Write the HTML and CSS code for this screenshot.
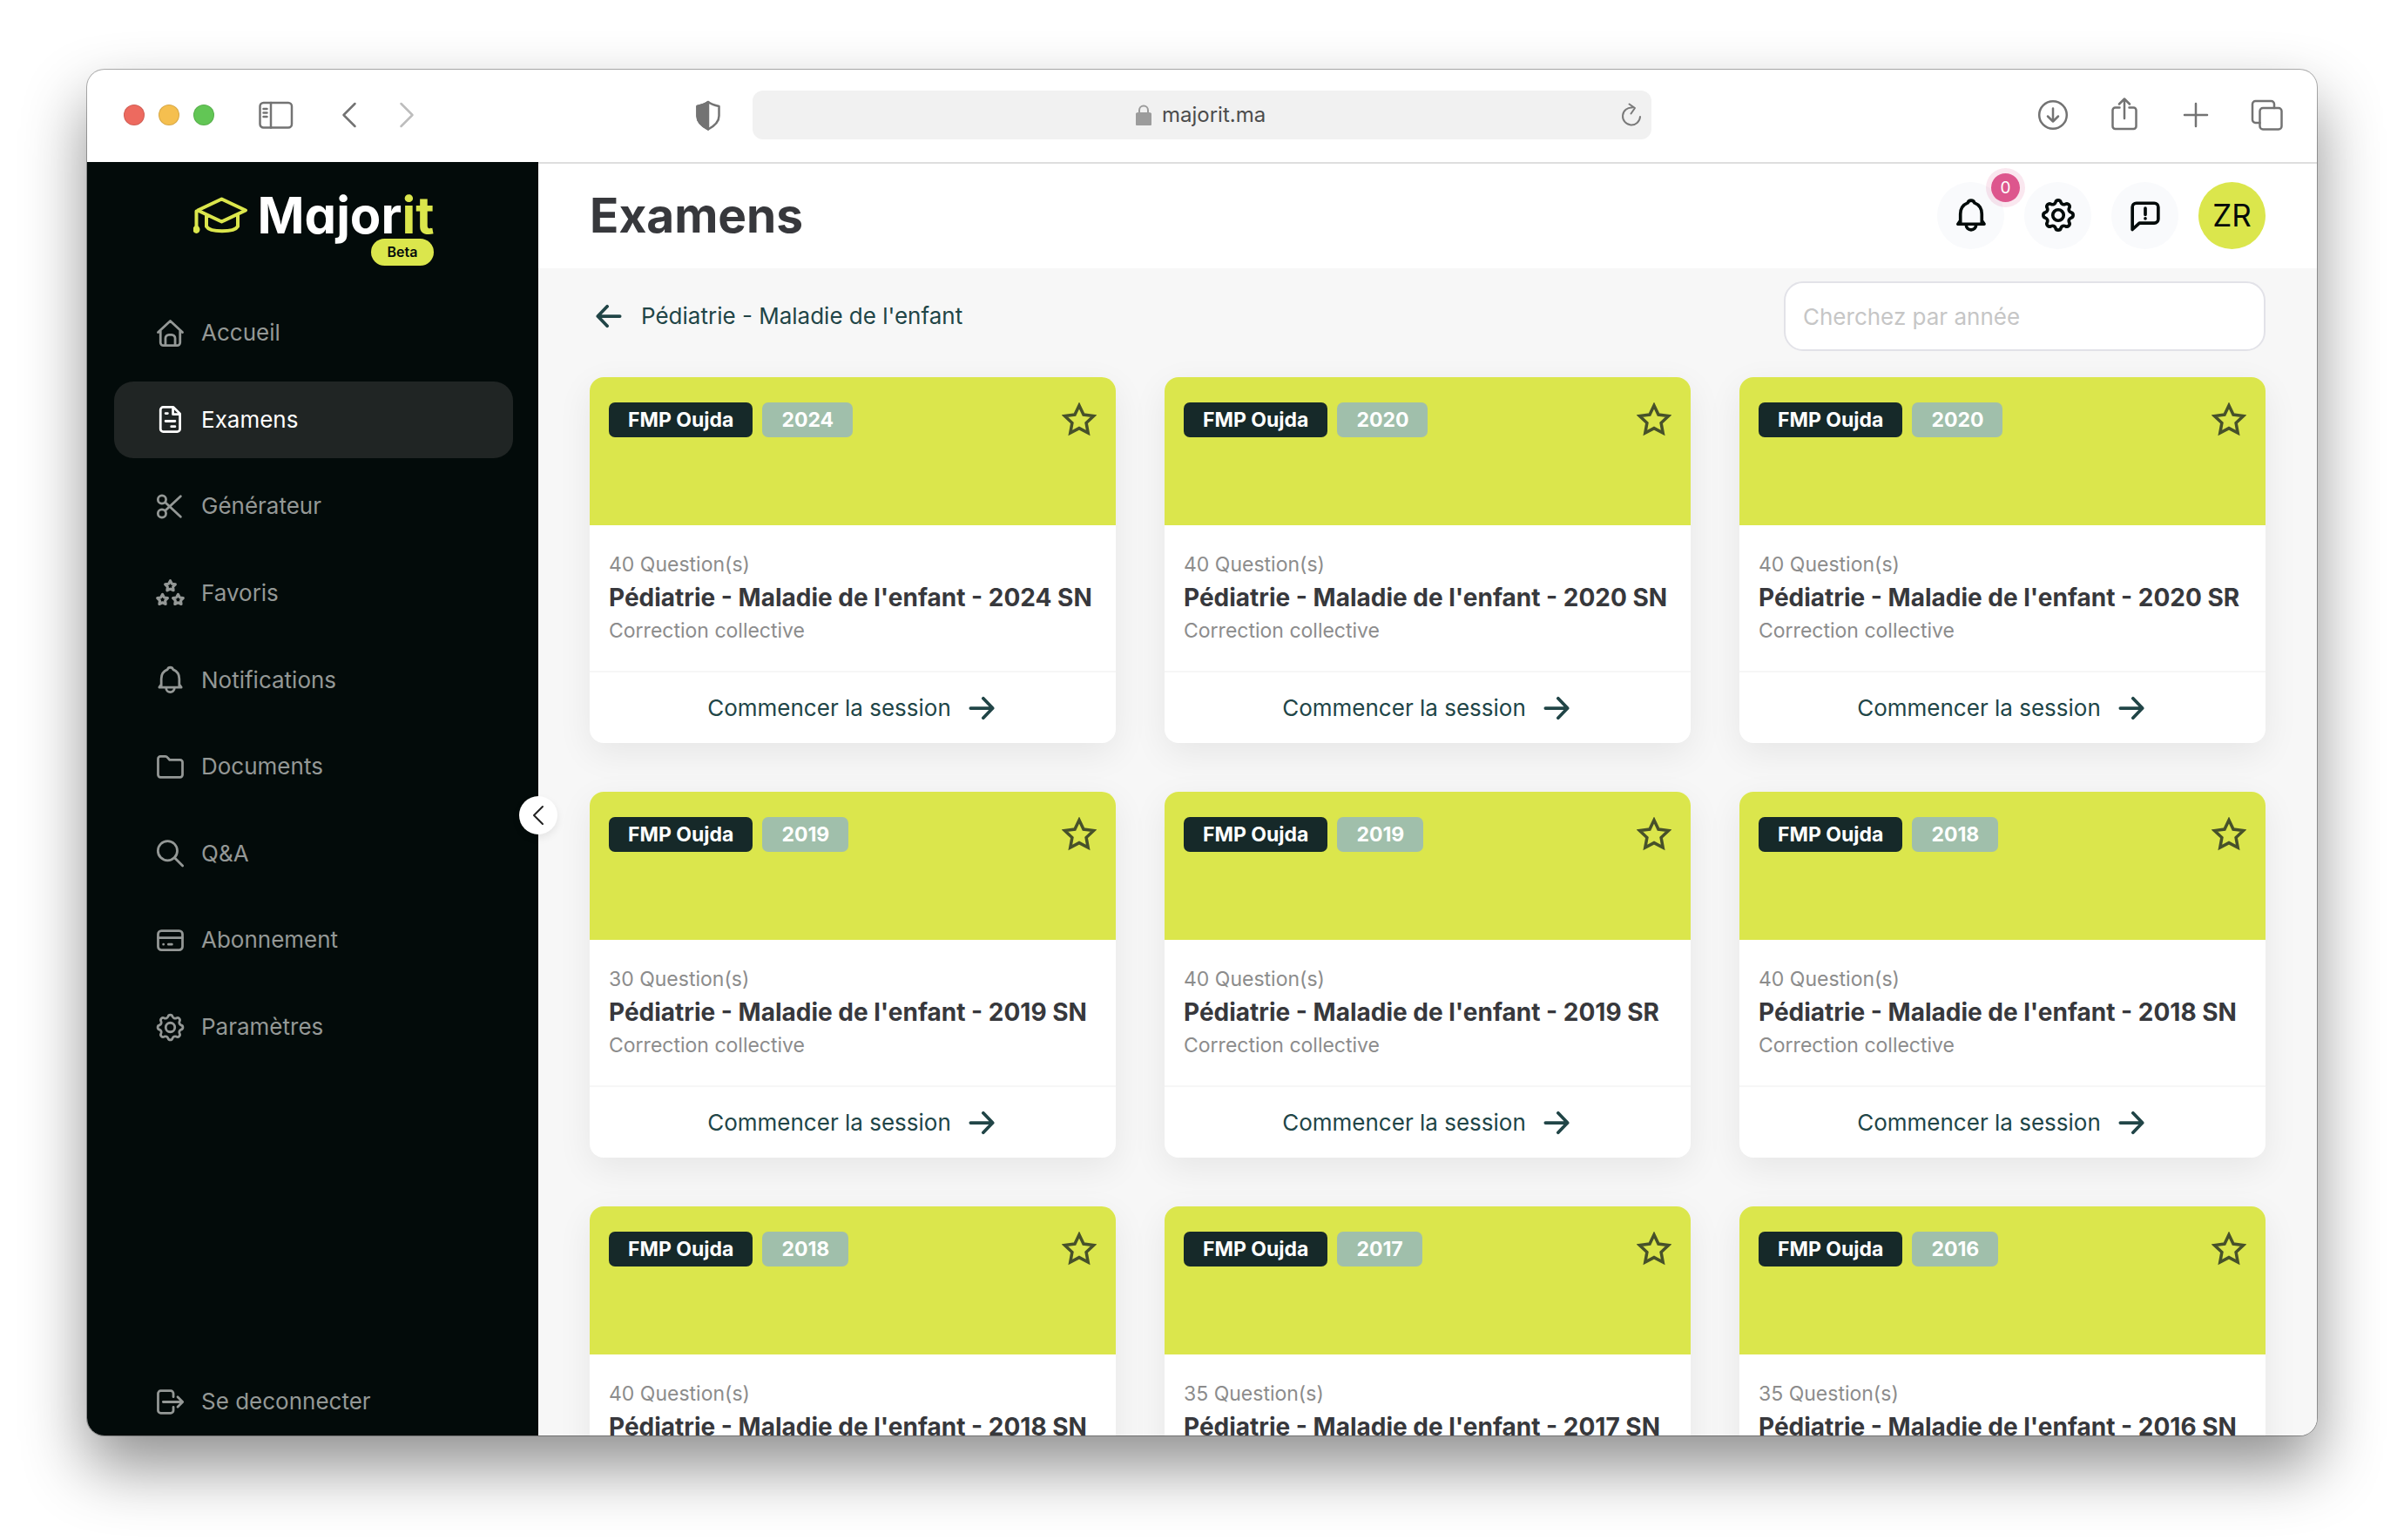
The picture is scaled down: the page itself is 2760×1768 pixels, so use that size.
FILE: index.html
```html
<!DOCTYPE html>
<html lang="fr">
<head>
<meta charset="utf-8">
<meta name="viewport" content="width=device-width, initial-scale=1">
<title>Majorit - Examens</title>
<link rel="stylesheet" href="styles.css">
</head>
<body>
<svg class="sprite" aria-hidden="true">
  <symbol id="i-star" viewBox="0 0 40 40"><path d="M20 3.5l5 10.6 11.6 1.5-8.5 8 2.1 11.5L20 29.6 9.8 35.1l2.1-11.5-8.5-8L15 14.1z"/></symbol>
  <symbol id="i-arrow" viewBox="0 0 32 32"><path d="M2.5 16h27M18 4l11.500 12L18 28"/></symbol>
  <symbol id="i-gear" viewBox="0 0 24 24"><circle cx="12" cy="12" r="3.400"/><path d="M10.300 3.980A1.750 1.750 0 0 1 13.700 3.980A2 2 0 0 0 16.470 5.120A1.750 1.750 0 0 1 18.880 7.530A2 2 0 0 0 20.020 10.300A1.750 1.750 0 0 1 20.020 13.700A2 2 0 0 0 18.880 16.470A1.750 1.750 0 0 1 16.470 18.880A2 2 0 0 0 13.700 20.020A1.750 1.750 0 0 1 10.300 20.020A2 2 0 0 0 7.530 18.880A1.750 1.750 0 0 1 5.120 16.470A2 2 0 0 0 3.980 13.700A1.750 1.750 0 0 1 3.980 10.300A2 2 0 0 0 5.120 7.530A1.750 1.750 0 0 1 7.530 5.120A2 2 0 0 0 10.300 3.980z"/></symbol>
  <symbol id="i-bell" viewBox="0 0 24 24"><path d="M5.300 17.300V11.300C5.300 8 7.200 5.400 9.900 4.300a2.200 2.200 0 0 1 4.200 0C16.800 5.400 18.700 8 18.700 11.300V17.300M5.200 15.500L3.800 17.600h16.400L18.800 15.500M8.900 18.200a3.100 3 0 0 0 6.200 0"/></symbol>
</svg>

<div class="window">
  <div class="toolbar">
    <div class="toolbar-left">
      <div class="lights"><span class="light red"></span><span class="light yellow"></span><span class="light green"></span></div>
      <button class="tool panel" aria-label="Barre latérale"><svg viewBox="0 0 40 40"><rect x="1.500" y="6" width="36.500" height="28.500" rx="4"/><path d="M14 6v28.500M5.500 13h4M5.500 17.500h4M5.500 22h4"/></svg></button>
      <div class="history">
        <button class="tool" aria-label="Précédent"><svg viewBox="0 0 40 40"><path d="M26.500 7L13.500 20l13 13"/></svg></button>
        <button class="tool faded" aria-label="Suivant"><svg viewBox="0 0 40 40"><path d="M13.500 7l13 13-13 13"/></svg></button>
      </div>
      <button class="tool shield" aria-label="Confidentialité"><svg viewBox="0 0 40 40"><path d="M20 5c4 3 8 4 12.500 5v11c0 7-5 11.500-12.500 15.500C12.500 32.500 7.500 28 7.500 21V10C12 9 16 8 20 5z"/><path class="solid" d="M20 5v31.500C12.500 32.500 7.500 28 7.500 21V10C12 9 16 8 20 5z"/></svg></button>
    </div>
    <div class="address">
      <label class="address-label" for="url"><svg class="lock" viewBox="0 0 18 24"><rect class="solid" x="0.500" y="10" width="17" height="13.500" rx="2.500"/><path d="M4 11V6.500a5 5 0 0 1 10 0V11"/></svg></label>
      <input id="url" class="address-input" type="text" value="majorit.ma" aria-label="Adresse">
      <button class="reload" aria-label="Actualiser"><svg viewBox="0 0 28 28"><path d="M15 5.500A10 10 0 1 0 24 16M11.500 1.500l6.500 4.500-4.500 6.500"/></svg></button>
    </div>
    <div class="toolbar-right">
      <button class="tool" aria-label="Téléchargements"><svg viewBox="0 0 40 40"><circle cx="20" cy="20" r="15.800"/><path d="M20 12.500v15M14 21.500l6 6 6-6"/></svg></button>
      <button class="tool" aria-label="Partager"><svg viewBox="0 0 40 40"><path d="M14.500 11.500H9.500a3 3 0 0 0-3 3V33a3 3 0 0 0 3 3h21a3 3 0 0 0 3-3V14.500a3 3 0 0 0-3-3h-5M20 24V2M14 7.500l6-6 6 6"/></svg></button>
      <button class="tool" aria-label="Nouvel onglet"><svg viewBox="0 0 40 40"><path d="M20 7v26M7 20h26"/></svg></button>
      <button class="tool" aria-label="Onglets"><svg viewBox="0 0 40 40"><rect x="11.500" y="12" width="25" height="24.500" rx="3.500"/><path d="M11.500 29H6.500a3.500 3.500 0 0 1-3.500-3.500V7.500A3.500 3.500 0 0 1 6.500 4h18A3.500 3.500 0 0 1 28 7.500V12"/></svg></button>
    </div>
  </div>

  <div class="app">
    <aside class="sidebar">
      <div class="brand">
        <a class="logo" href="#"><svg class="logo-cap" viewBox="0 0 64 44"><path d="M5 16.500L32.500 3.500 60 16.500 32.500 29.500zM3.500 39V17.500M15 22v13c4 7 32 7 36 0V22"/><ellipse cx="3.500" cy="38.500" rx="2" ry="2.500"/></svg><span>Major<span class="accent">it</span></span></a>
        <span class="beta">Beta</span>
      </div>
      <nav class="nav">
        <a class="nav-item" href="#"><svg class="icon" viewBox="0 0 24 24"><path d="M2.900 11.400L12 2.900l9.100 8.500M4.700 10v9a2.200 2.200 0 0 0 2.200 2.200h10.200a2.200 2.200 0 0 0 2.200-2.200V10M8.400 21v-5.200a2.600 2.600 0 0 1 2.600-2.600h2a2.600 2.600 0 0 1 2.600 2.600V21"/></svg>Accueil</a>
        <a class="nav-item active" href="#" aria-current="page"><svg class="icon" viewBox="0 0 24 24"><path d="M6.700 2.900h7.600l4.900 4.800v11.400a2 2 0 0 1-2 2H6.700a2 2 0 0 1-2-2V4.900a2 2 0 0 1 2-2zM14 3.300v4.900h4.900M8.500 7.500h1.500M8.500 13.300h7M12.800 17.300h2.700"/></svg>Examens</a>
        <a class="nav-item" href="#"><svg class="icon" viewBox="0 0 24 24"><circle cx="5.800" cy="6.800" r="3"/><circle cx="5.800" cy="17.200" r="3"/><path d="M8.200 8.900l11.500 10.700M8.200 15.100L19.700 4.400"/></svg>Générateur</a>
        <a class="nav-item" href="#"><svg class="icon stars" viewBox="0 0 24 24"><path d="M12 3l1.230 2.300 2.570.46-1.800 1.890.35 2.590L12 9.100l-2.350 1.140.35-2.590-1.800-1.890 2.570-.46zM6.200 13.200l1.230 2.300 2.570.46-1.800 1.890.35 2.590L6.200 19.300l-2.350 1.140.35-2.590-1.800-1.890 2.570-.46zM17.800 13.200l1.230 2.300 2.570.46-1.800 1.890.35 2.590-2.350-1.140-2.350 1.140.35-2.590-1.800-1.890 2.570-.46z"/></svg>Favoris</a>
        <a class="nav-item" href="#"><svg class="icon"><use href="#i-bell"/></svg>Notifications</a>
        <a class="nav-item" href="#"><svg class="icon" viewBox="0 0 24 24"><path d="M2.900 6a1.800 1.800 0 0 1 1.800-1.800h3.700a2 2 0 0 1 1.500.7l1.700 1.900h7.700A1.800 1.800 0 0 1 21.100 8.600v9.300a1.800 1.800 0 0 1-1.800 1.800H4.700a1.800 1.800 0 0 1-1.800-1.800z"/></svg>Documents</a>
        <a class="nav-item" href="#"><svg class="icon" viewBox="0 0 24 24"><circle cx="10" cy="10.200" r="7.200"/><path d="M15.200 15.400l6 6"/></svg>Q&amp;A</a>
        <a class="nav-item" href="#"><svg class="icon" viewBox="0 0 24 24"><rect x="2.900" y="4.900" width="18.200" height="14.300" rx="2.500"/><path d="M3 10.100h18M6.900 15h.01M10.600 15h2.600"/></svg>Abonnement</a>
        <a class="nav-item" href="#"><svg class="icon"><use href="#i-gear"/></svg>Paramètres</a>
      </nav>
      <button class="nav-item logout"><svg class="icon" viewBox="0 0 24 24"><path d="M14.300 8.200V5.700a2 2 0 0 0-2-2H4.900a2 2 0 0 0-2 2v12.600a2 2 0 0 0 2 2h7.400a2 2 0 0 0 2-2v-2.500M6.700 12h14.400M17.500 8.300l3.700 3.700-3.700 3.700"/></svg>Se deconnecter</button>
      <button class="collapse" aria-label="Réduire le menu"><svg viewBox="0 0 24 24"><path d="M17 2L7 12l10 10"/></svg></button>
    </aside>

    <main class="main">
      <header class="header">
        <h1 class="title">Examens</h1>
        <div class="actions">
          <button class="round" aria-label="Notifications"><svg class="icon-lg"><use href="#i-bell"/></svg><span class="count">0</span></button>
          <button class="round" aria-label="Paramètres"><svg class="icon-lg"><use href="#i-gear"/></svg></button>
          <button class="round" aria-label="Commentaires"><svg class="icon-lg" viewBox="0 0 24 24"><path d="M3.900 21V7a2.500 2.500 0 0 1 2.500-2.500h11.200A2.500 2.500 0 0 1 20.100 7v7.500a2.500 2.500 0 0 1-2.500 2.500H8.300zM12 7.700v4M12 14.100v.1"/></svg></button>
          <button class="round avatar">ZR</button>
        </div>
      </header>

      <div class="content">
        <div class="filters">
          <a class="back" href="#"><svg class="arrow flip"><use href="#i-arrow"/></svg>Pédiatrie - Maladie de l'enfant</a>
          <input class="search" type="search" placeholder="Cherchez par année" aria-label="Cherchez par année">
        </div>
        <div class="cards">
          <article class="card">
            <div class="cover"><span class="tag">FMP Oujda</span><span class="tag year">2024</span><button class="fav" aria-label="Favori"><svg><use href="#i-star"/></svg></button></div>
            <div class="info"><p>40 Question(s)</p><h2>Pédiatrie - Maladie de l'enfant - 2024 SN</h2><p>Correction collective</p></div>
            <button class="start">Commencer la session<svg class="arrow"><use href="#i-arrow"/></svg></button>
          </article>
          <article class="card">
            <div class="cover"><span class="tag">FMP Oujda</span><span class="tag year">2020</span><button class="fav" aria-label="Favori"><svg><use href="#i-star"/></svg></button></div>
            <div class="info"><p>40 Question(s)</p><h2>Pédiatrie - Maladie de l'enfant - 2020 SN</h2><p>Correction collective</p></div>
            <button class="start">Commencer la session<svg class="arrow"><use href="#i-arrow"/></svg></button>
          </article>
          <article class="card">
            <div class="cover"><span class="tag">FMP Oujda</span><span class="tag year">2020</span><button class="fav" aria-label="Favori"><svg><use href="#i-star"/></svg></button></div>
            <div class="info"><p>40 Question(s)</p><h2>Pédiatrie - Maladie de l'enfant - 2020 SR</h2><p>Correction collective</p></div>
            <button class="start">Commencer la session<svg class="arrow"><use href="#i-arrow"/></svg></button>
          </article>
          <article class="card">
            <div class="cover"><span class="tag">FMP Oujda</span><span class="tag year">2019</span><button class="fav" aria-label="Favori"><svg><use href="#i-star"/></svg></button></div>
            <div class="info"><p>30 Question(s)</p><h2>Pédiatrie - Maladie de l'enfant - 2019 SN</h2><p>Correction collective</p></div>
            <button class="start">Commencer la session<svg class="arrow"><use href="#i-arrow"/></svg></button>
          </article>
          <article class="card">
            <div class="cover"><span class="tag">FMP Oujda</span><span class="tag year">2019</span><button class="fav" aria-label="Favori"><svg><use href="#i-star"/></svg></button></div>
            <div class="info"><p>40 Question(s)</p><h2>Pédiatrie - Maladie de l'enfant - 2019 SR</h2><p>Correction collective</p></div>
            <button class="start">Commencer la session<svg class="arrow"><use href="#i-arrow"/></svg></button>
          </article>
          <article class="card">
            <div class="cover"><span class="tag">FMP Oujda</span><span class="tag year">2018</span><button class="fav" aria-label="Favori"><svg><use href="#i-star"/></svg></button></div>
            <div class="info"><p>40 Question(s)</p><h2>Pédiatrie - Maladie de l'enfant - 2018 SN</h2><p>Correction collective</p></div>
            <button class="start">Commencer la session<svg class="arrow"><use href="#i-arrow"/></svg></button>
          </article>
          <article class="card">
            <div class="cover"><span class="tag">FMP Oujda</span><span class="tag year">2018</span><button class="fav" aria-label="Favori"><svg><use href="#i-star"/></svg></button></div>
            <div class="info"><p>40 Question(s)</p><h2>Pédiatrie - Maladie de l'enfant - 2018 SN</h2><p>Correction collective</p></div>
            <button class="start">Commencer la session<svg class="arrow"><use href="#i-arrow"/></svg></button>
          </article>
          <article class="card">
            <div class="cover"><span class="tag">FMP Oujda</span><span class="tag year">2017</span><button class="fav" aria-label="Favori"><svg><use href="#i-star"/></svg></button></div>
            <div class="info"><p>35 Question(s)</p><h2>Pédiatrie - Maladie de l'enfant - 2017 SN</h2><p>Correction collective</p></div>
            <button class="start">Commencer la session<svg class="arrow"><use href="#i-arrow"/></svg></button>
          </article>
          <article class="card">
            <div class="cover"><span class="tag">FMP Oujda</span><span class="tag year">2016</span><button class="fav" aria-label="Favori"><svg><use href="#i-star"/></svg></button></div>
            <div class="info"><p>35 Question(s)</p><h2>Pédiatrie - Maladie de l'enfant - 2016 SN</h2><p>Correction collective</p></div>
            <button class="start">Commencer la session<svg class="arrow"><use href="#i-arrow"/></svg></button>
          </article>
        </div>
      </div>
    </main>
  </div>
</div>
</body>
</html>
```
FILE: styles.css
```css
:root {
  --lime: #dbe64c;
  --night: #030b0a;
  --teal: #214547;
  --text: #37383c;
  --muted: #8c8c8c;
}

* { box-sizing: border-box; }

body {
  margin: 0;
  height: 100vh;
  padding: 80px 100px 120px;
  background: #fff;
  color: var(--text);
  font-family: Inter, "Liberation Sans", sans-serif;
  font-size: 26px;
  line-height: 32px;
}

h1, h2, p { margin: 0; }
a { color: inherit; text-decoration: none; }

button, input {
  margin: 0;
  padding: 0;
  border: 0;
  background: none;
  color: inherit;
  font: inherit;
}

svg {
  display: block;
  flex: none;
  fill: none;
  stroke: currentColor;
  stroke-linecap: round;
  stroke-linejoin: round;
}

.sprite { position: absolute; width: 0; height: 0; }

.window {
  display: flex;
  flex-direction: column;
  height: 100%;
  overflow: hidden;
  border-radius: 20px;
  background: #fff;
  box-shadow: 0 0 0 1px rgba(0, 0, 0, 0.3), 0 36px 72px rgba(0, 0, 0, 0.44);
}

/* Browser toolbar */
.toolbar {
  display: grid;
  grid-template-columns: 1fr minmax(0, 1032px) 1fr;
  flex: none;
  align-items: center;
  height: 106px;
  padding: 0 37px 2px;
}
.toolbar-left { display: flex; align-items: center; }
.toolbar-right { display: flex; justify-content: flex-end; gap: 42px; }
.lights { display: flex; gap: 16px; padding-left: 5px; }
.light { width: 24px; height: 24px; border-radius: 50%; border: 1px solid rgba(0, 0, 0, 0.12); }
.red { background: #ed6a5f; }
.yellow { background: #f5bf4f; }
.green { background: #62c655; }
.tool { color: #737373; }
.tool svg { width: 40px; height: 40px; stroke-width: 2.5; }
.panel { margin-left: 51px; }
.history { display: flex; gap: 26px; margin-left: 44px; }
.faded { color: #bdbdbd; }
.shield { margin-left: auto; margin-right: 31px; }
.solid { fill: currentColor; }

.address {
  position: relative;
  display: flex;
  align-items: center;
  justify-content: center;
  gap: 12px;
  height: 56px;
  border-radius: 12px;
  background: #f1f1f1;
  color: #4c4c4c;
}
.address-label { color: #9c9c9c; }
.lock { width: 18px; height: 24px; stroke-width: 2; }
.address-input { width: 122px; font-size: 24px; }
.reload { position: absolute; right: 9px; color: #7a7a7a; }
.reload svg { width: 28px; height: 28px; stroke-width: 2; }

/* Application shell */
.app { display: flex; flex: 1; min-height: 0; }

.sidebar {
  position: relative;
  z-index: 1;
  display: flex;
  flex-direction: column;
  flex: none;
  width: 518px;
  padding: 34px 29px 0 31px;
  background: var(--night);
  color: #949896;
}
.brand {
  display: flex;
  flex-direction: column;
  align-items: flex-end;
  align-self: center;
  margin-bottom: 33px;
}
.logo {
  display: flex;
  align-items: center;
  gap: 10px;
  color: #fff;
  font-size: 58px;
  font-weight: 700;
  line-height: 54px;
  font-feature-settings: "cv11";
}
.logo-cap { width: 64px; height: 44px; color: var(--lime); stroke-width: 4; }
.accent { color: var(--lime); }
.beta {
  padding: 0 19px;
  border-radius: 16px;
  background: var(--lime);
  color: var(--night);
  font-size: 16px;
  font-weight: 600;
  line-height: 31px;
}

.nav { display: grid; align-content: space-between; min-height: 885px; }
.nav-item {
  display: flex;
  align-items: center;
  gap: 17px;
  height: 88px;
  padding: 0 46px;
  border-radius: 22px;
}
.active { background: #202524; color: #fff; }
.icon { width: 37px; height: 37px; stroke-width: 1.8; }
.stars { stroke-width: 2; }
.logout { margin-top: auto; margin-bottom: -5px; }
.collapse {
  position: absolute;
  top: 728px;
  right: -22px;
  display: grid;
  place-items: center;
  width: 44px;
  height: 44px;
  border-radius: 50%;
  background: #fff;
  box-shadow: 0 4px 10px rgba(0, 0, 0, 0.08);
  color: #222;
}
.collapse svg { width: 24px; height: 24px; stroke-width: 2; }

.main {
  flex: 1;
  min-width: 0;
  overflow: hidden;
  background: #f7f7f7;
}
.header {
  display: flex;
  align-items: center;
  justify-content: space-between;
  height: 122px;
  padding: 0 59px 2px;
  border-top: 2px solid #dedede;
  background: #fff;
}
.title { font-size: 55px; font-weight: 700; line-height: 64px; }
.actions { display: flex; gap: 23px; }
.round {
  position: relative;
  display: grid;
  place-items: center;
  width: 77px;
  height: 77px;
  border-radius: 50%;
  background: #f9fafc;
  color: var(--night);
}
.icon-lg { width: 44px; height: 44px; stroke-width: 2; }
.avatar { background: var(--lime); font-size: 35px; }
.count {
  position: absolute;
  top: -10px;
  right: -18px;
  width: 33px;
  height: 33px;
  border-radius: 50%;
  background: #dd568d;
  box-shadow: 0 0 0 6px rgba(221, 86, 141, 0.14);
  color: #fff;
  font-size: 19px;
  line-height: 33px;
  text-align: center;
}

/* Exam list */
.content { padding: 15px 59px; }
.filters { display: flex; align-items: center; justify-content: space-between; margin-bottom: 30px; }
.back { display: flex; align-items: center; gap: 22px; padding-left: 7px; color: var(--teal); }
.arrow { width: 30px; height: 30px; stroke-width: 4; }
.flip { transform: scaleX(-1); }
.search {
  width: 553px;
  height: 80px;
  padding: 0 20px;
  border: 2px solid #e2e2e8;
  border-radius: 22px;
  background: #fff;
  appearance: none;
}
.search::placeholder { color: #c6c6c6; opacity: 1; }

.cards { display: grid; grid-template-columns: repeat(3, 1fr); gap: 56px; }
.card {
  overflow: hidden;
  border-radius: 16px;
  background: #fff;
  box-shadow: 0 12px 40px rgba(0, 0, 0, 0.07);
}
.cover {
  display: flex;
  align-items: flex-start;
  gap: 11px;
  height: 170px;
  padding: 29px 22px;
  background: var(--lime);
}
.tag {
  padding: 0 22px;
  border-radius: 7px;
  background: #162929;
  color: #fff;
  font-size: 23px;
  font-weight: 700;
  line-height: 40px;
}
.year { background: #a0bfab; }
.fav { margin-left: auto; color: #47512a; }
.fav svg { width: 40px; height: 40px; stroke-width: 3.5; stroke-linejoin: miter; }
.info { padding: 27px 22px 28px; color: var(--muted); font-size: 23px; line-height: 36px; }
.info h2 { color: var(--text); font-size: 28px; font-weight: 700; line-height: 40px; }
.start {
  display: flex;
  align-items: center;
  justify-content: center;
  gap: 20px;
  width: 100%;
  height: 83px;
  padding-right: 4px;
  border-top: 2px solid #f6f6f6;
  color: var(--teal);
}
```
